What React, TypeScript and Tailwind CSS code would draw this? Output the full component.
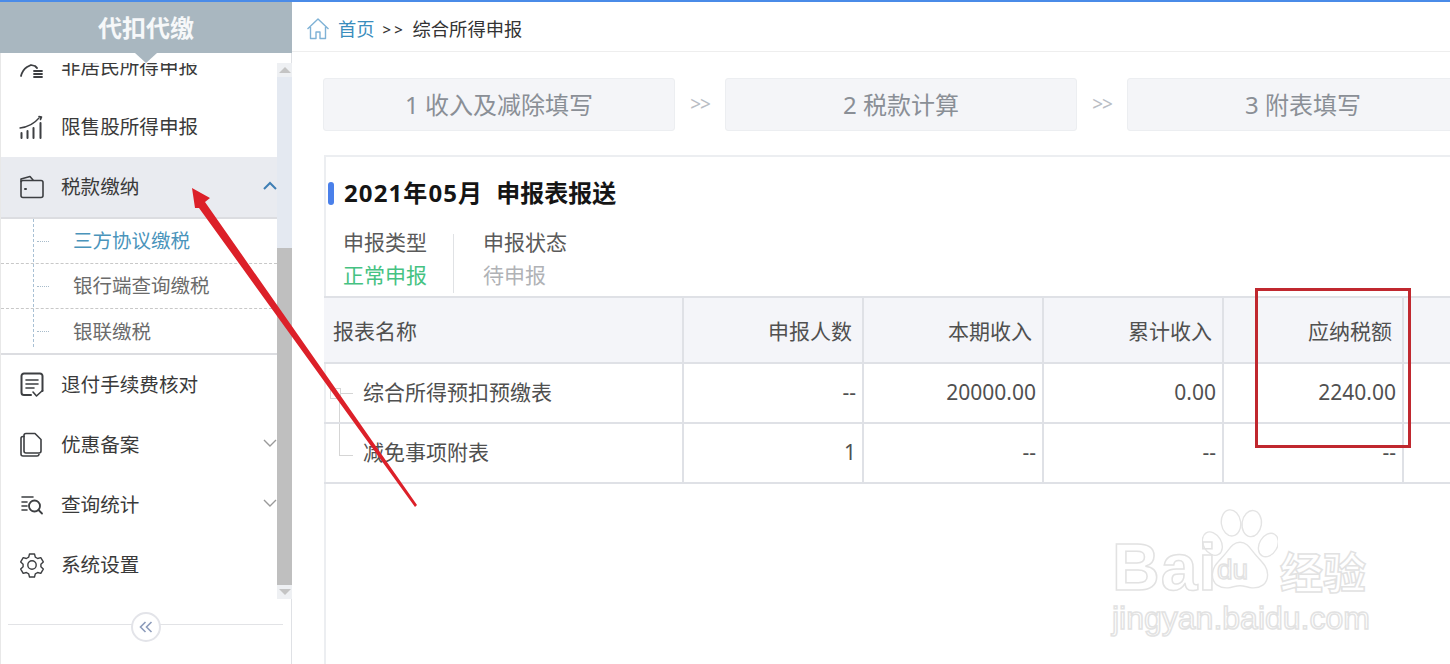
import React from "react";

const CJK = '"Noto Sans","Noto Sans CJK SC",sans-serif';

const iconProps = {
  width: 26,
  height: 26,
  viewBox: "0 0 26 26",
  fill: "none",
  stroke: "#3d3f42",
  strokeWidth: 1.6,
  strokeLinecap: "round" as const,
  strokeLinejoin: "round" as const,
};

const GaugeIcon = () => (
  <svg {...iconProps}>
    <path d="M2 22c1-4 3-7 6-9l4-2 4 1 2 2" strokeWidth={1.8} />
    <path d="M15 17h8M15 20h8M15 23h8" strokeWidth={1.8} />
  </svg>
);
const BarsIcon = () => (
  <svg {...iconProps}>
    <path d="M1 14c8-1 14-4 19-10" strokeWidth={1.3} />
    <path d="M20 2.500l2.500 0.500-1 2.500" fill="#3d3f42" />
    <path d="M2.500 19v5M8.500 17v7M14.500 14v10M21.500 9v15" strokeWidth={2} />
  </svg>
);
const WalletIcon = () => (
  <svg {...iconProps}>
    <path d="M2 7.500V5l9-2.500 3 3.500" />
    <rect x="2" y="6.500" width="22" height="17" rx="2" />
    <path d="M6 15h1" strokeWidth={2} />
  </svg>
);
const NoteIcon = () => (
  <svg {...iconProps}>
    <path d="M12 23H5a2.500 2.500 0 0 1-2.500-2.500V4A2.500 2.500 0 0 1 5 1.500h16A2.500 2.500 0 0 1 23.500 4v15" strokeWidth={2} />
    <path d="M7 8h12M7 12h12M7 16h8" strokeWidth={1.6} />
    <path d="M14 20l3.500 4 6-5.500" />
  </svg>
);
const PagesIcon = () => (
  <svg {...iconProps}>
    <path d="M7 1.500h9l6 6V19a2 2 0 0 1-2 2H7a2 2 0 0 1-2-2V3.500a2 2 0 0 1 2-2z" />
    <path d="M5 4.500H4a2 2 0 0 0-2 2V22a2 2 0 0 0 2 2h14a2 2 0 0 0 2-1.500" />
  </svg>
);
const SearchListIcon = () => (
  <svg {...iconProps}>
    <path d="M3 5h11M3 10h5M3 14h5M3 18h5" />
    <circle cx="15.500" cy="14" r="5.500" strokeWidth={1.8} />
    <path d="M19.500 18l3.500 3.500" strokeWidth={1.8} />
  </svg>
);
const GearIcon = () => (
  <svg {...iconProps} strokeWidth={1.4}>
    <path d="M10.500 2h5l.8 3.200 2.300 1.300 3.200-.9 2.500 4.300-2.400 2.300v2.600l2.400 2.300-2.500 4.300-3.200-.9-2.300 1.300-.8 3.200h-5l-.8-3.200-2.300-1.300-3.200.9-2.500-4.300 2.400-2.300v-2.600L1.700 9.900l2.500-4.300 3.200.9 2.300-1.300z" />
    <circle cx="13" cy="13" r="4.200" />
  </svg>
);
const Chevron = ({ up, color }: { up?: boolean; color: string }) => (
  <svg className="-mt-[4px]" width="14" height="9" viewBox="0 0 14 9" fill="none" stroke={color} strokeWidth={up ? 2 : 1.4}>
    <path d={up ? "M1 8l6-6 6 6" : "M1 1l6 6 6-6"} />
  </svg>
);

function MenuItem({
  icon,
  label,
  arrow,
  active,
}: {
  icon: React.ReactNode;
  label: string;
  arrow?: "up" | "down";
  active?: boolean;
}) {
  return (
    <div className={`h-[60px] shrink-0 flex items-center pl-[18px] ${active ? "bg-[#e9ebf0]" : ""}`}>
      <span className="w-[26px] h-[26px] flex items-center justify-center">{icon}</span>
      <span className="ml-[16px] text-[19.600px] text-[#3a3a3a] flex-1 whitespace-nowrap">{label}</span>
      {arrow === "up" && <Chevron up color="#3f7fb5" />}
      {arrow === "down" && <Chevron color="#9a9a9a" />}
    </div>
  );
}

function SubItem({ label, active, last }: { label: string; active?: boolean; last?: boolean }) {
  return (
    <div className={`h-[45px] flex items-center ${last ? "" : "border-b border-dashed border-[#c8c8c8]"}`}>
      <span className="ml-[36px] w-[12px] border-t border-dotted border-[#a8bccb]" />
      <span className={`ml-[24px] text-[19.500px] whitespace-nowrap ${active ? "text-[#4a94bb]" : "text-[#6b6b6b]"}`}>
        {label}
      </span>
    </div>
  );
}

function Sidebar() {
  return (
    <aside className="w-[292px] shrink-0 relative flex flex-col border-r border-[#dfe1e5] border-l border-l-[#e8e8e8]">
      <div className="-ml-px h-[51px] w-[292px] shrink-0 bg-[#a9b7c0] flex items-center justify-center text-white/90 text-[24px] font-bold relative z-10">
        代扣代缴
        <span className="absolute left-[135px] top-[51px] w-0 h-0 border-l-[11px] border-r-[11px] border-t-[10px] border-l-transparent border-r-transparent border-t-[#a9b7c0]" />
      </div>
      <div className="flex-1 flex min-h-0">
        <div className="w-[276px] h-[536px] mt-[10px] overflow-hidden flex flex-col">
          <div className="-mt-[26px] flex flex-col">
            <MenuItem icon={<GaugeIcon />} label="非居民所得申报" />
            <MenuItem icon={<BarsIcon />} label="限售股所得申报" />
            <MenuItem icon={<WalletIcon />} label="税款缴纳" arrow="up" active />
            <div className="relative border-t-2 border-b-2 border-[#dcdde1] h-[138px] shrink-0">
              <span className="absolute left-[32px] top-0 bottom-[6px] border-l border-dashed border-[#a8c0d4]" />
              <SubItem label="三方协议缴税" active />
              <SubItem label="银行端查询缴税" />
              <SubItem label="银联缴税" last />
            </div>
            <MenuItem icon={<NoteIcon />} label="退付手续费核对" />
            <MenuItem icon={<PagesIcon />} label="优惠备案" arrow="down" />
            <MenuItem icon={<SearchListIcon />} label="查询统计" arrow="down" />
            <MenuItem icon={<GearIcon />} label="系统设置" />
          </div>
        </div>
        <div className="w-[15px] h-[536px] mt-[10px] -mr-px flex flex-col bg-[#e4e9f1] shrink-0">
          <div className="h-[14px] bg-[#eef0f3] flex items-center justify-center">
            <span className="w-0 h-0 border-l-[6px] border-r-[6px] border-b-[6px] border-l-transparent border-r-transparent border-b-[#c4c4c4]" />
          </div>
          <div className="h-[171px]" />
          <div className="flex-1 bg-[#bfbfbf]" />
          <div className="h-[14px] bg-[#eef0f3] flex items-center justify-center">
            <span className="w-0 h-0 border-l-[6px] border-r-[6px] border-t-[6px] border-l-transparent border-r-transparent border-t-[#c4c4c4]" />
          </div>
        </div>
      </div>
      <div className="absolute left-[7px] w-[275px] top-[622px] border-t border-[#e2e3e6]" />
      <div className="absolute left-[130px] top-[610px] w-[30px] h-[30px] rounded-full bg-white border-2 border-[#e3e4e9] flex items-center justify-center">
        <svg width="14" height="12" viewBox="0 0 14 12" fill="none" stroke="#8d9cbb" strokeWidth="1.600">
          <path d="M6.500 1L1.500 6l5 5M12.500 1l-5 5 5 5" />
        </svg>
      </div>
    </aside>
  );
}

const Step = ({ label }: { label: string }) => (
  <div className="w-[352px] h-[53px] shrink-0 rounded-[3px] bg-[#f4f5f8] border border-[#eceef1] flex items-center justify-center text-[24px] text-[#8a8f96]">
    {label}
  </div>
);
const StepSep = () => (
  <div className="w-[50px] shrink-0 text-center text-[#b9bdc4] text-[19px] tracking-[-1px]">&gt;&gt;</div>
);

const colClass = "border-r-2 border-b-2 border-[#dfe1e6] align-middle";

function Table() {
  const headers = ["申报人数", "本期收入", "累计收入", "应纳税额"];
  const rows = [
    ["综合所得预扣预缴表", "--", "20000.00", "0.00", "2240.00"],
    ["减免事项附表", "1", "--", "--", "--"],
  ];
  return (
    <table className="-ml-[2px] w-[1126px] table-fixed border-collapse text-[21px] text-[#505050]">
      <colgroup>
        <col className="w-[359px]" />
        <col className="w-[180px]" />
        <col className="w-[180px]" />
        <col className="w-[180px]" />
        <col className="w-[180px]" />
        <col />
      </colgroup>
      <thead>
        <tr className="h-[66px] bg-[#f4f5f9] border-t-2 border-[#dfe1e6]">
          <th className={`${colClass} font-normal text-left pl-[9px] pt-[3px]`}>报表名称</th>
          {headers.map((h) => (
            <th key={h} className={`${colClass} font-normal text-right pr-[10px] pt-[3px]`}>
              {h}
            </th>
          ))}
          <th className="border-b-2 border-[#dfe1e6]" />
        </tr>
      </thead>
      <tbody>
        {rows.map((r, i) => (
          <tr key={r[0]} className="h-[60px]">
            <td className={`${colClass} pl-[39px] relative`}>
              {i === 0 && (
                <>
                  <span className="absolute left-[6px] top-[24px] w-[11px] h-[11px] border border-[#d5d5d5]" />
                  <span className="absolute left-[17px] top-[29px] w-[12px] border-t border-[#d5d5d5]" />
                  <span className="absolute left-[15px] top-[35px] bottom-0 border-l border-[#d5d5d5]" />
                </>
              )}
              {i === 1 && (
                <>
                  <span className="absolute left-[15px] top-0 h-[31px] border-l border-[#d5d5d5]" />
                  <span className="absolute left-[15px] top-[31px] w-[14px] border-t border-[#d5d5d5]" />
                </>
              )}
              {r[0]}
            </td>
            {r.slice(1).map((c, j) => (
              <td key={j} className={`${colClass} text-right pr-[6px]`}>
                {c}
              </td>
            ))}
            <td className="border-b-2 border-[#dfe1e6]" />
          </tr>
        ))}
      </tbody>
    </table>
  );
}

function Main() {
  return (
    <main className="flex-1 min-w-0 flex flex-col overflow-hidden">
      <div className="h-[50px] shrink-0 border-b border-[#eeeeee] flex items-center pl-[14px] pt-[5px] text-[18.300px] whitespace-nowrap">
        <svg width="24" height="24" viewBox="0 0 24 24" fill="none" stroke="#7fb2d6" strokeWidth={1.4} strokeLinejoin="round">
          <path d="M1.500 12L12 2l10.500 10M4.500 10v11.500h5.500V15h4v6.500h5.500V10" />
        </svg>
        <span className="ml-[8px] text-[#3a8dbd]">首页</span>
        <span className="ml-[8px] w-[30px] text-[#333] text-[15px] font-medium tracking-[3px] whitespace-nowrap">&gt;&gt;</span>
        <span className="text-[#333]">综合所得申报</span>
      </div>
      <div className="pl-[31px] pt-[26px] flex items-center whitespace-nowrap">
        <Step label="1 收入及减除填写" />
        <StepSep />
        <Step label="2 税款计算" />
        <StepSep />
        <Step label="3 附表填写" />
      </div>
      <section className="ml-[32px] mt-[24px] w-[1200px] border-l-2 border-t-2 border-[#eceef1] flex-1">
        <h2 className="h-[69px] pt-[2px] flex items-center text-[24px] font-bold text-[#151515] relative pl-[18px] whitespace-pre">
          <span className="absolute left-[2px] top-[25px] w-[6px] h-[23px] rounded-[3px] bg-[#4a80ea]" />
          <span className="tracking-[1.100px]">2021年05月</span>
          <span className="ml-[13px]">申报表报送</span>
        </h2>
        <div className="flex h-[70px] text-[21px] leading-[33px]">
          <div className="w-[128px] pl-[17px] relative">
            <div className="text-[#5a5a5a]">申报类型</div>
            <div className="text-[#45c282]">正常申报</div>
            <span className="absolute right-0 top-[8px] bottom-[3px] border-r border-[#e0e2e5]" />
          </div>
          <div className="pl-[29px]">
            <div className="text-[#5a5a5a]">申报状态</div>
            <div className="text-[#b0b2b6]">待申报</div>
          </div>
        </div>
        <Table />
      </section>
    </main>
  );
}

function Watermark() {
  const stroke = "[-webkit-text-stroke:1.500px_#e2e2e2] text-transparent";
  return (
    <div className="absolute left-[1112px] top-[506px] w-[262px] h-[126px] pointer-events-none font-['Liberation_Sans',sans-serif]">
      <svg className="absolute left-[90px] top-[1px]" width="76" height="81" viewBox="0 0 110 117" fill="none" stroke="#e4e4e4" strokeWidth="2">
        <ellipse cx="42" cy="20" rx="14" ry="19" transform="rotate(-8 42 20)" />
        <ellipse cx="72" cy="21" rx="14" ry="19" transform="rotate(8 72 21)" />
        <ellipse cx="15" cy="50" rx="13" ry="18" transform="rotate(-30 15 50)" />
        <ellipse cx="96" cy="52" rx="13" ry="18" transform="rotate(30 96 52)" />
        <path d="M55 48c-11 0-15 10-24 20-9 10-16 16-16 27 0 14 11 20 23 19 7-1 11-3 17-3s10 2 17 3c12 1 23-5 23-19 0-11-7-17-16-27-9-10-13-20-24-20z" />
      </svg>
      <span className={`absolute left-0 top-[26px] text-[66px] leading-[66px] font-bold tracking-[1px] ${stroke}`}>Bai</span>
      <span className={`absolute left-[105px] top-[48px] text-[28px] leading-[28px] ${stroke}`}>du</span>
      <span className={`absolute left-[168px] top-[41px] text-[43px] leading-[43px] font-bold ${stroke} font-['Noto_Sans_CJK_SC',sans-serif]`}>经验</span>
      <span className={`absolute left-0 top-[94px] text-[32px] leading-[32px] whitespace-nowrap ${stroke}`}>jingyan.baidu.com</span>
    </div>
  );
}

function Annotations() {
  return (
    <>
      <div className="absolute left-[1255px] top-[288px] w-[156px] h-[160px] border-[3px] border-[#c0282f] pointer-events-none" />
      <svg className="absolute left-0 top-0 pointer-events-none" width="1450" height="664" viewBox="0 0 1450 664">
        <polygon points="192,188 210,198 205,202 417,505 415,507 199,208 195,208" fill="#dc2029" />
      </svg>
    </>
  );
}

export default function App() {
  return (
    <div
      className="relative w-[1450px] h-[664px] overflow-hidden bg-white border-t-2 border-[#4a8be8] flex"
      style={{ fontFamily: CJK }}
    >
      <Sidebar />
      <Main />
      <Watermark />
      <div className="absolute -top-[2px] left-0">
        <Annotations />
      </div>
    </div>
  );
}
